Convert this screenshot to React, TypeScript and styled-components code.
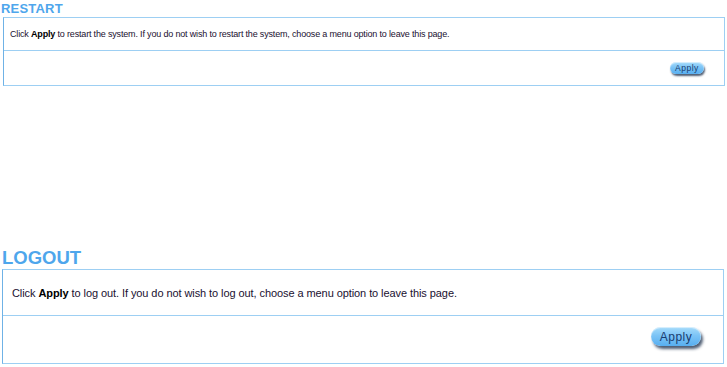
import React from "react";
import styled, { createGlobalStyle } from "styled-components";

const Global = createGlobalStyle`
  html, body { margin: 0; padding: 0; background: #fff; }
  body { font-family: "Liberation Sans", Arial, sans-serif; color: #1a1030; }
`;

const Page = styled.div`
  width: 727px;
  height: 367px;
  display: flex;
  flex-direction: column;
  overflow: hidden;
`;

const Section = styled.section<{ $small?: boolean }>`
  display: flex;
  flex-direction: column;
  padding-left: ${(p) => (p.$small ? "3px" : "2px")};
  width: 722px;
  margin-top: ${(p) => (p.$small ? "0" : "161px")};
`;

const Title = styled.h1<{ $small?: boolean }>`
  margin: 0 0 0 ${(p) => (p.$small ? "-2px" : "0")};
  font-family: "Liberation Sans", Arial, sans-serif;
  font-weight: bold;
  color: #4ea6ec;
  font-size: ${(p) => (p.$small ? "13px" : "18.5px")};
  line-height: ${(p) => (p.$small ? "17px" : "22px")};
  letter-spacing: ${(p) => (p.$small ? "0.2px" : "0")};
`;

const Box = styled.div`
  border: 1px solid #9dcff3;
  border-left-color: #6fb2e6;
  display: flex;
  flex-direction: column;
`;

const TextRow = styled.div<{ $small?: boolean }>`
  height: ${(p) => (p.$small ? "32px" : "45px")};
  display: flex;
  align-items: center;
  padding-left: ${(p) => (p.$small ? "6px" : "9px")};
  font-size: ${(p) => (p.$small ? "9px" : "11px")};
  letter-spacing: ${(p) => (p.$small ? "-0.17px" : "-0.08px")};
  border-bottom: 1px solid #9dcff3;
  color: #1a1030;
  b { color: #000; }
`;

const ButtonRow = styled.div<{ $small?: boolean }>`
  height: ${(p) => (p.$small ? "34px" : "47px")};
  display: flex;
  align-items: center;
  justify-content: flex-end;
  padding-right: ${(p) => (p.$small ? "20px" : "22px")};
  padding-bottom: ${(p) => (p.$small ? "0" : "6px")};
  box-sizing: border-box;
`;

const ApplyButton = styled.button<{ $small?: boolean }>`
  width: ${(p) => (p.$small ? "34px" : "50px")};
  height: ${(p) => (p.$small ? "12px" : "19px")};
  border-radius: 999px;
  border: none;
  padding: 0;
  font-family: "Liberation Sans", Arial, sans-serif;
  font-size: ${(p) => (p.$small ? "8.5px" : "12px")};
  letter-spacing: 0.5px;
  color: #1b3c6e;
  background: linear-gradient(#a6dcfb 0%, #7cc4f6 45%, #57aef0 100%);
  box-shadow: ${(p) => (p.$small ? "1px 2px 2px" : "2px 3px 3px")} rgba(20, 40, 70, 0.75),
    inset 0 1px 1px rgba(255, 255, 255, 0.6);
  cursor: pointer;
  line-height: 1;
`;

function Panel({ title, text, small }: { title: string; text: React.ReactNode; small?: boolean }) {
  return (
    <Section $small={small}>
      <Title $small={small}>{title}</Title>
      <Box>
        <TextRow $small={small}>
          <span>{text}</span>
        </TextRow>
        <ButtonRow $small={small}>
          <ApplyButton $small={small}>Apply</ApplyButton>
        </ButtonRow>
      </Box>
    </Section>
  );
}

export default function App() {
  return (
    <Page>
      <Global />
      <Panel
        small
        title="RESTART"
        text={
          <>
            Click <b>Apply</b> to restart the system. If you do not wish to restart the system, choose a menu option to
            leave this page.
          </>
        }
      />
      <Panel
        title="LOGOUT"
        text={
          <>
            Click <b>Apply</b> to log out. If you do not wish to log out, choose a menu option to leave this page.
          </>
        }
      />
    </Page>
  );
}
